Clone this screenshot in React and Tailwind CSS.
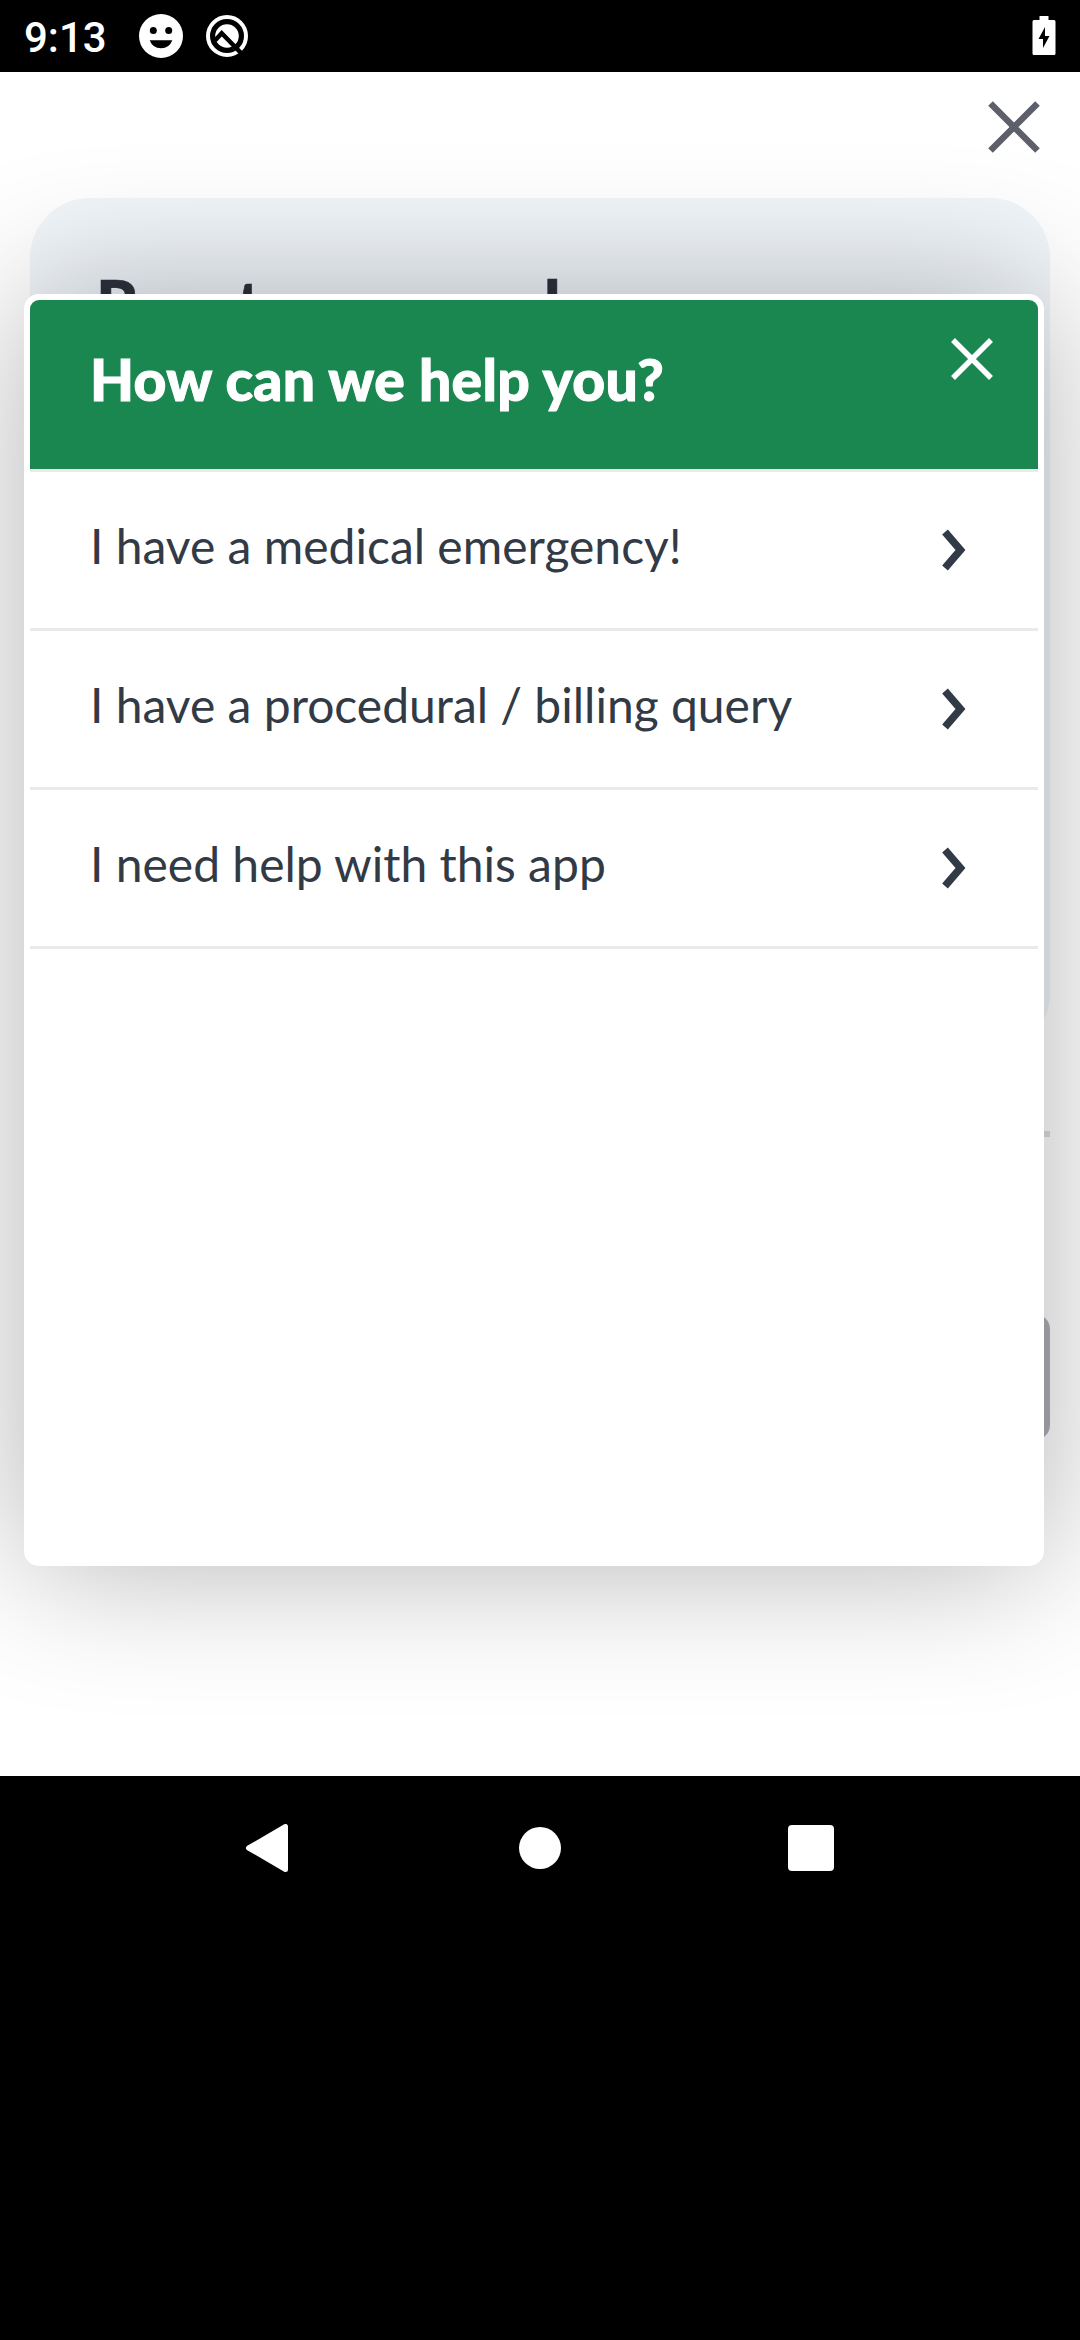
const rows = [
  "I have a medical emergency!",
  "I have a procedural / billing query",
  "I need help with this app",
];

function StatusBar() {
  return (
    <header className="flex h-[72px] shrink-0 items-center bg-black pl-6 pr-6 text-white">
      <span className="w-[114px] pt-[3px] font-[Roboto] text-[42px] leading-[69px] font-medium">9:13</span>
      <svg className="h-[46px] w-[46px]" viewBox="0 0 46 46">
        <circle cx="23" cy="23" r="22" fill="#fff" />
        <circle cx="15.3" cy="17.5" r="3.5" fill="#000" />
        <circle cx="30.7" cy="17.5" r="3.5" fill="#000" />
        <path d="M11.7 27.3h22.6a12 12 0 0 1-22.6 0z" fill="#000" />
      </svg>
      <svg className="ml-5 h-[46px] w-[46px]" viewBox="0 0 46 46" fill="none">
        <circle cx="23" cy="23" r="19" stroke="#fff" strokeWidth="4" />
        <circle cx="23" cy="23" r="11.8" fill="#fff" />
        <path d="M11 27.500L17.700 20.200L37 40" stroke="#000" strokeWidth="4.500" />
      </svg>
      <svg className="ml-auto h-[40px] w-[24px]" viewBox="0 0 24 40">
        <path d="M7.500 0h9v4H22a1.500 1.500 0 0 1 1.500 1.500v32A1.500 1.500 0 0 1 22 39H2A1.500 1.500 0 0 1 .5 37.500v-32A1.500 1.500 0 0 1 2 4h5.500z" fill="#fff" />
        <path d="M13 11L6.500 23H11v9L17.500 20H13z" fill="#000" />
      </svg>
    </header>
  );
}

function HelpDialog() {
  return (
    <section className="absolute top-[222px] left-6 h-[1272px] w-[1020px] rounded-[15px] border-[6px] border-white bg-white text-[#323a46] shadow-[0_0_144px_rgba(0,0,0,0.3)]">
      <div className="flex h-[172px] items-start justify-between rounded-t-[9px] border-b-[3px] border-[#eaeaea] bg-[#1a8751] pt-[38px] pr-[45px] pl-[60px] text-white">
        <h2 className="-mt-px text-[57px] leading-[84px] font-black tracking-[0.32px] whitespace-nowrap [-webkit-text-stroke:1px_white]">How can we help you?</h2>
        <svg className="h-[42px] w-[42px]" viewBox="0 0 42 42" stroke="#fff" strokeWidth="5.5">
          <path d="M2 2L40 40M40 2L2 40" />
        </svg>
      </div>
      {rows.map((label) => (
        <div key={label} className="flex h-[159px] items-center justify-between border-b-[3px] border-[#eaeaea] pr-[72px] pl-[60px]">
          <span className="pb-2 text-[48px] leading-[72px] whitespace-nowrap">{label}</span>
          <svg className="h-[42px] w-[24px]" viewBox="0 0 24 42" fill="none" stroke="#323a46" strokeWidth="7.500">
            <path d="M3 3L18.500 21L3 39" />
          </svg>
        </div>
      ))}
    </section>
  );
}

function NavBar() {
  return (
    <nav className="flex h-[144px] shrink-0 items-center justify-between bg-black pr-[246px] pl-[245px]">
      <svg className="h-[48px] w-[46px]" viewBox="0 0 46 48">
        <path d="M3.500 24L40.500 2.500V45.500z" fill="#fff" stroke="#fff" strokeWidth="5" strokeLinejoin="round" />
      </svg>
      <div className="h-[42px] w-[42px] rounded-full bg-white" />
      <div className="h-[46px] w-[46px] rounded-[4px] bg-white" />
    </nav>
  );
}

export default function App() {
  return (
    <div className="flex h-[2340px] w-[1080px] flex-col overflow-hidden bg-black font-[Lato,sans-serif]">
      <StatusBar />
      <main className="relative flex h-[1704px] shrink-0 flex-col overflow-hidden bg-white px-[30px]">
        <div className="flex h-[126px] shrink-0 justify-end pt-[29px] pr-[10px]">
          <svg className="h-[52px] w-[52px]" viewBox="0 0 52 52" stroke="#5d606a" strokeWidth="6.500">
            <path d="M2.500 2.500L49.500 49.500M49.500 2.500L2.500 49.500" />
          </svg>
        </div>
        <div className="h-[855px] shrink-0 rounded-[60px] bg-[#f1f6fb] px-[66px] pt-[64px]">
          <h1 className="text-[66px] leading-[84px] font-black tracking-[0.1px] text-[#2d323e] [-webkit-text-stroke:0.6px_#2d323e]">Reset password</h1>
        </div>
        <div className="mt-[78px] h-[6px] shrink-0 bg-[#dfdfdf]" />
        <div className="mt-[177px] h-[126px] shrink-0 rounded-[15px] bg-[#afb0b7]" />
        <HelpDialog />
      </main>
      <NavBar />
    </div>
  );
}
